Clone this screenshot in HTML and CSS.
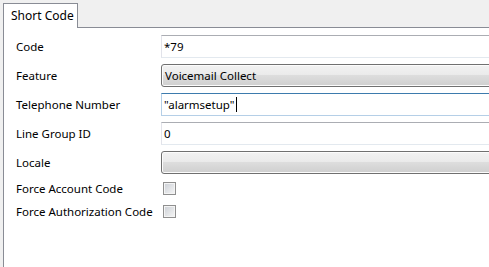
FILE: index.html
```html
<!DOCTYPE html>
<html lang="en">
<head>
    <meta charset="UTF-8">
    <title>Short Code</title>
    <link rel="stylesheet" href="styles.css">
</head>
<body>
    <div class="tabs">
        <div class="tab">Short Code</div>
    </div>

    <div class="panel">
        <div class="form-grid">
            <label>Code</label>
            <div class="field">*79</div>

            <label>Feature</label>
            <div class="combo">Voicemail Collect</div>

            <label>Telephone Number</label>
            <div class="field focused">"alarmsetup"<span class="caret"></span></div>

            <label>Line Group ID</label>
            <div class="field">0</div>

            <label>Locale</label>
            <div class="combo"></div>

            <label>Force Account Code</label>
            <div class="check-cell"><span class="checkbox"></span></div>

            <label>Force Authorization Code</label>
            <div class="check-cell"><span class="checkbox"></span></div>
        </div>
    </div>
</body>
</html>
```

FILE: styles.css
```css
:root {
    --bg-color: #f0f0f0;
    --tab-border: #898c95;
    --text-color: #000000;
}

html, body {
    height: 100%;
}

body {
    font-family: 'Noto Sans', 'Open Sans', sans-serif;
    font-size: 11.5px;
    color: var(--text-color);
    background-color: var(--bg-color);
    margin: 0;
    overflow: hidden;
    display: flex;
    flex-direction: column;
}

.tabs {
    display: flex;
    padding: 3px 0 0 3px;
    height: 24px;
}

.tab {
    width: 75px;
    box-sizing: border-box;
    border: 1px solid var(--tab-border);
    border-bottom: none;
    background: #ffffff;
    padding-left: 7px;
    line-height: 23px;
    font-size: 12px;
    margin-bottom: -1px;
    position: relative;
    z-index: 1;
}

.panel {
    flex: 1;
    margin-left: 3px;
    border-top: 1px solid var(--tab-border);
    border-left: 1px solid var(--tab-border);
    background: #ffffff;
    padding: 7px 0 0 12px;
}

.form-grid {
    display: grid;
    grid-template-columns: 145px 340px;
    grid-template-rows: repeat(5, 23px) repeat(2, 17px);
    row-gap: 6px;
    align-items: center;
}

.form-grid label {
    line-height: 17px;
    white-space: nowrap;
}

.field {
    height: 23px;
    box-sizing: border-box;
    border: 1px solid #e2e3ea;
    border-top-color: #abadb3;
    border-bottom-color: #e3e9ef;
    padding-left: 2px;
    line-height: 21px;
    background: #ffffff;
}

.field.focused {
    border-color: #b5cfe7;
    border-top-color: #3d7bad;
}

.caret {
    display: inline-block;
    width: 1px;
    height: 15px;
    background: #000000;
    vertical-align: -3px;
    margin-left: 1px;
}

.combo {
    height: 23px;
    box-sizing: border-box;
    border: 1px solid #707070;
    border-radius: 3px;
    padding-left: 3px;
    line-height: 21px;
    background: linear-gradient(#f2f2f2 0%, #ebebeb 45%, #dddddd 50%, #cfcfcf 100%);
    box-shadow: inset 0 0 0 1px #fcfcfc;
}

.check-cell {
    display: flex;
    align-items: center;
    padding-left: 2px;
}

.checkbox {
    width: 13px;
    height: 13px;
    box-sizing: border-box;
    border: 1px solid #8f8f8f;
    background: linear-gradient(135deg, #cbcfd5 0%, #f6f6f6 100%);
    box-shadow: inset 0 0 0 1px #f4f4f4;
}
```
